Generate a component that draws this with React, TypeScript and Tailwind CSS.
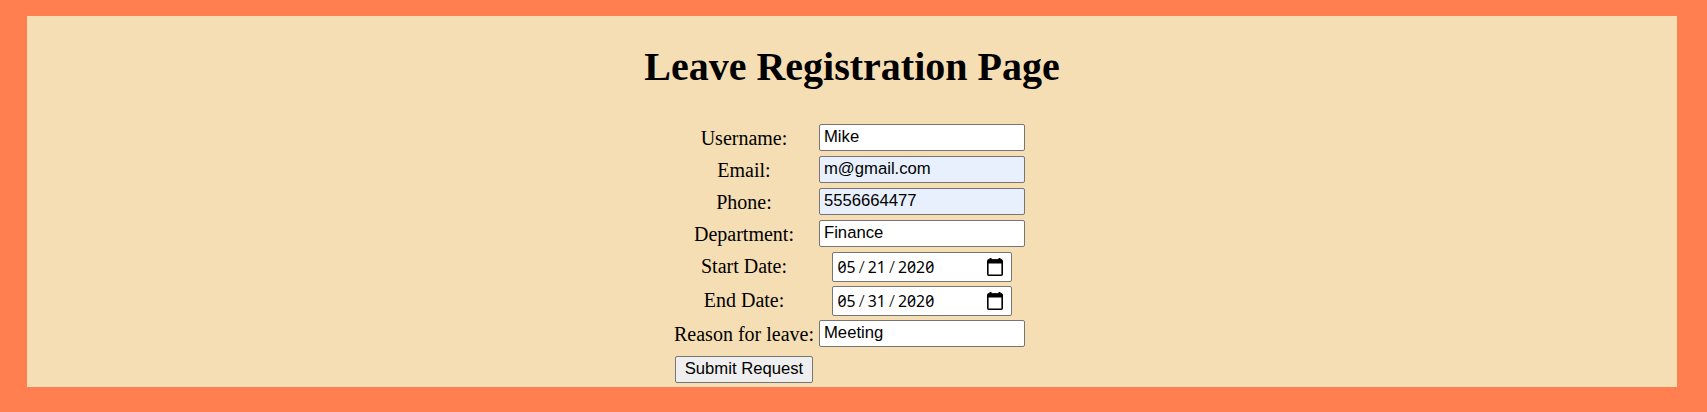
import React from "react";

type FieldProps = { label: string; value: string; type?: string; filled?: boolean };

function Label({ children }: { children: React.ReactNode }) {
  return <span className="text-center text-[20px] leading-[23px] whitespace-nowrap">{children}</span>;
}

function TextField({ label, value, type = "text", filled = false }: FieldProps) {
  return (
    <label className="grid h-[27px] grid-cols-[140px_206px] items-start gap-x-[5px]">
      <div className="flex justify-center pt-[3px]">
        <Label>{label}</Label>
      </div>
      <input
        type={type}
        defaultValue={value}
        className={`h-[27px] w-[206px] rounded-[2px] border border-[#767676] px-1 pb-px font-['Liberation_Sans',Arial,sans-serif] text-[16.667px] leading-[19px] text-black outline-none ${
          filled ? "bg-[#e8f0fe]" : "bg-white"
        }`}
      />
    </label>
  );
}

function CalendarIcon() {
  return (
    <svg width="16" height="18" viewBox="0 0 16 18" aria-hidden="true">
      <path d="M2.5 0h2v2h-2zM11.5 0h2v2h-2z" fill="#000" />
      <rect x="0.8" y="2" width="14.4" height="15.2" rx="1" fill="none" stroke="#000" strokeWidth="1.6" />
      <path d="M1 1.5h14V5.5H1z" fill="#000" />
    </svg>
  );
}

function DateField({ label, month, day, year }: { label: string; month: string; day: string; year: string }) {
  return (
    <div className="grid h-[30px] grid-cols-[140px_206px] items-start gap-x-[5px]">
      <div className="flex justify-center pt-[3px]">
        <Label>{label}</Label>
      </div>
      <div className="ml-[13px] flex h-[30px] w-[180px] items-center justify-between rounded-[2px] border border-[#767676] bg-white pr-2 pb-px pl-[4.5px] text-black">
        <div className="flex font-['Noto_Sans',sans-serif] text-[15.8px] leading-[20px] slashed-zero">
          <span>{month}</span>
          <span className="w-[12.2px] text-center text-[17px] font-light">/</span>
          <span>{day}</span>
          <span className="w-[12.2px] text-center text-[17px] font-light">/</span>
          <span>{year}</span>
        </div>
        <CalendarIcon />
      </div>
    </div>
  );
}

export default function App() {
  return (
    <main className="h-[412px] bg-[#ff7f50] pt-4 pr-[30px] pl-[27px] font-['Liberation_Serif','Times_New_Roman',serif] text-black">
      <section className="flex h-[371px] flex-col items-center bg-[#f5deb3] pt-7">
        <h1 className="text-[40px] leading-[46px] font-bold whitespace-nowrap">Leave Registration Page</h1>
        <form className="mt-[34px] mr-[5px] flex w-[351px] flex-col" onSubmit={(e) => e.preventDefault()}>
          <div className="flex flex-col gap-[5px]">
            <TextField label="Username:" value="Mike" />
            <TextField label="Email:" value="m@gmail.com" type="email" filled />
            <TextField label="Phone:" value="5556664477" type="tel" filled />
            <TextField label="Department:" value="Finance" />
          </div>
          <div className="mt-[5px] mb-1 flex flex-col gap-1">
            <DateField label="Start Date:" month="05" day="21" year="2020" />
            <DateField label="End Date:" month="05" day="31" year="2020" />
          </div>
          <TextField label="Reason for leave:" value="Meeting" />
          <button
            type="submit"
            className="mt-[9px] ml-px h-[27px] w-[138px] rounded-[2px] border border-[#767676] bg-[#efefef] pb-[2px] font-['Liberation_Sans',Arial,sans-serif] text-[16.667px] leading-[19px] whitespace-nowrap"
          >
            Submit Request
          </button>
        </form>
      </section>
    </main>
  );
}
